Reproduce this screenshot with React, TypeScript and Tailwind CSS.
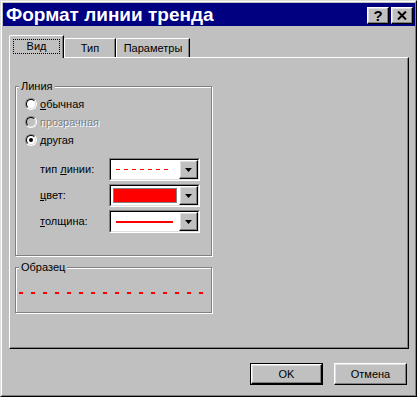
import React from "react";

const raised =
  "border border-t-white border-l-white border-r-black border-b-black shadow-[inset_-1px_-1px_0_#808080,inset_1px_1px_0_#dfdfdf]";

function Radio({ checked, disabled }: { checked?: boolean; disabled?: boolean }) {
  return (
    <div className="w-[12px] h-[12px] rounded-full border border-t-[#808080] border-l-[#808080] border-r-white border-b-white">
      <div
        className={`w-full h-full rounded-full border border-t-black border-l-black border-r-[#dfdfdf] border-b-[#dfdfdf] flex items-center justify-center ${
          disabled ? "bg-[#c0c0c0]" : "bg-white"
        }`}
      >
        {checked && <div className="w-[4px] h-[4px] rounded-full bg-black" />}
      </div>
    </div>
  );
}

function Combo({ children }: { children: React.ReactNode }) {
  return (
    <div className="w-[91px] h-[23px] border border-t-[#808080] border-l-[#808080] border-r-white border-b-white">
      <div className="w-full h-full border border-t-black border-l-black border-r-[#dfdfdf] border-b-[#dfdfdf] bg-white flex">
        <div className="flex-1 flex items-center">{children}</div>
        <div className={`w-[19px] h-full bg-[#c0c0c0] flex items-center justify-center ${raised}`}>
          <svg width="7" height="4" viewBox="0 0 7 4">
            <polygon points="0,0 7,0 3.5,4" fill="#000" />
          </svg>
        </div>
      </div>
    </div>
  );
}

export default function App() {
  return (
    <div className="w-[417px] h-[397px] bg-[#c0c0c0] font-['Liberation_Sans',Arial,sans-serif] text-[11px] text-black flex flex-col border border-t-[#dfdfdf] border-l-[#dfdfdf] border-r-black border-b-black">
      <div className="flex-1 flex flex-col border border-t-white border-l-white border-r-[#808080] border-b-[#808080] pt-px pl-px">
        {/* Title bar */}
        <div className="h-[23px] bg-[#000080] flex items-start pl-[3px] pr-[2px]">
          <span className="text-white font-bold text-[19px] leading-[23px]">Формат линии тренда</span>
          <div className="ml-auto mt-[4px] flex gap-[2px]">
            <div className={`w-[22px] h-[17px] bg-[#c0c0c0] flex items-center justify-center ${raised}`}>
              <span className="font-bold text-[15px] leading-none">?</span>
            </div>
            <div className={`w-[22px] h-[17px] bg-[#c0c0c0] flex items-center justify-center ${raised}`}>
              <svg width="10" height="9" viewBox="0 0 10 9">
                <path d="M1 0.5 L9 8.5 M9 0.5 L1 8.5" stroke="#000" strokeWidth="2" />
              </svg>
            </div>
          </div>
        </div>

        {/* Tabs */}
        <div className="mt-[9px] pl-[6px] flex items-end h-[22px] relative z-10">
          <div className="w-[55px] h-[23px] -mb-px bg-[#c0c0c0] border-l border-t border-white rounded-tl-[2px] border-r border-r-black shadow-[inset_-1px_0_0_#808080] flex items-start justify-center pt-[3px]">
            <div className="border border-dotted border-black w-[47px] h-[15px] flex items-center justify-center">Вид</div>
          </div>
          <div className="w-[52px] h-[19px] bg-[#c0c0c0] border-l border-t border-white rounded-tl-[2px] border-r border-r-black shadow-[inset_-1px_0_0_#808080] flex items-center justify-center">
            Тип
          </div>
          <div className="w-[74px] h-[19px] bg-[#c0c0c0] border-l border-t border-white rounded-tl-[2px] border-r border-r-black shadow-[inset_-1px_0_0_#808080] flex items-center justify-center">
            Параметры
          </div>
        </div>

        {/* Panel */}
        <div className="ml-[6px] w-[400px] h-[292px] border border-t-white border-l-white border-r-black border-b-black shadow-[inset_-1px_-1px_0_#808080] pl-[5px] pt-[28px]">
          {/* Линия group */}
          <div className="relative w-[197px] h-[170px] border border-[#808080] shadow-[inset_1px_1px_0_white,1px_1px_0_white]">
            <div className="absolute -top-[8px] left-[3px] px-[2px] bg-[#c0c0c0] leading-[14px]">Линия</div>
            <div className="mt-[8px] pl-[9px] flex flex-col">
              <div className="h-[18px] flex items-center gap-[3px]">
                <Radio />
                <span>
                  <span className="underline">о</span>бычная
                </span>
              </div>
              <div className="h-[18px] flex items-center gap-[3px]">
                <Radio disabled />
                <span className="text-[#808080] [text-shadow:1px_1px_0_white]">прозрачная</span>
              </div>
              <div className="h-[18px] flex items-center gap-[3px]">
                <Radio checked />
                <span>другая</span>
              </div>
            </div>
            <div className="mt-[9px] pl-[24px] flex flex-col gap-[3px]">
              <div className="flex items-center">
                <span className="w-[69px]">
                  тип <span className="underline">л</span>инии:
                </span>
                <Combo>
                  <svg width="60" height="2" className="ml-[5px]">
                    <line x1="0" y1="0.5" x2="56" y2="0.5" stroke="#ff0000" strokeWidth="1" strokeDasharray="4 4" />
                  </svg>
                </Combo>
              </div>
              <div className="flex items-center">
                <span className="w-[69px]">
                  <span className="underline">ц</span>вет:
                </span>
                <Combo>
                  <div className="ml-[2px] w-[64px] h-[15px] bg-[#ff0000] border border-[#808080]" />
                </Combo>
              </div>
              <div className="flex items-center">
                <span className="w-[69px]">
                  <span className="underline">т</span>олщина:
                </span>
                <Combo>
                  <div className="ml-[5px] w-[57px] h-[2px] bg-[#ff0000]" />
                </Combo>
              </div>
            </div>
          </div>

          {/* Образец group */}
          <div className="relative mt-[11px] w-[197px] h-[46px] border border-[#808080] shadow-[inset_1px_1px_0_white,1px_1px_0_white]">
            <div className="absolute -top-[8px] left-[3px] px-[2px] bg-[#c0c0c0] leading-[14px]">Образец</div>
            <div className="mt-[24px] ml-[3px]">
              <svg width="186" height="2" className="block">
                <line x1="0" y1="1" x2="186" y2="1" stroke="#ff0000" strokeWidth="2" strokeDasharray="4 8" />
              </svg>
            </div>
          </div>
        </div>

        {/* Buttons */}
        <div className="mt-[14px] flex justify-end gap-[11px] pr-[8px]">
          <div className="w-[73px] h-[22px] border border-black">
            <div className={`w-full h-full bg-[#c0c0c0] flex items-center justify-center ${raised}`}>OK</div>
          </div>
          <div className={`w-[73px] h-[22px] bg-[#c0c0c0] flex items-center justify-center ${raised}`}>Отмена</div>
        </div>
      </div>
    </div>
  );
}
